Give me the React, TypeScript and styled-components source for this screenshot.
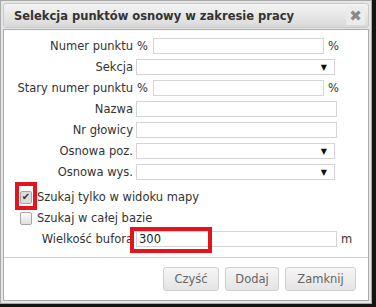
import React from 'react';
import styled, { createGlobalStyle } from 'styled-components';

const GlobalStyle = createGlobalStyle`
  html, body {
    margin: 0;
    padding: 0;
    background: #141414;
  }
  body {
    font-family: "DejaVu Sans", Verdana, sans-serif;
    font-size: 11.5px;
    color: #333;
  }
`;

const Dialog = styled.div`
  width: 372px;
  height: 304px;
  box-sizing: border-box;
  border: 1px solid #a9a9a9;
  background: #e6e6e6;
  padding: 2px;
  display: flex;
  flex-direction: column;
  gap: 1px;
`;

const TitleBar = styled.div`
  height: 25px;
  box-sizing: border-box;
  border: 1px solid #c8c8c8;
  border-radius: 3px;
  background: linear-gradient(#f4f4f4, #d9d9d9);
  display: flex;
  align-items: center;
  justify-content: space-between;
  padding: 0 3px 0 10px;
`;

const Title = styled.span`
  font-weight: bold;
  font-size: 11.5px;
  color: #333;
`;

const CloseBtn = styled.span`
  width: 19px;
  height: 19px;
  display: flex;
  align-items: center;
  justify-content: center;
  background: #ececec;
  border-radius: 2px;
  color: #8a8a8a;
  font-size: 15px;
  font-weight: bold;
`;

const Body = styled.div`
  flex: 1;
  background: #fff;
  border: 1px solid #ababab;
  display: flex;
  flex-direction: column;
`;

const Form = styled.div<{ $top: number }>`
  padding-top: ${p => p.$top}px;
  display: flex;
  flex-direction: column;
  gap: 5px;
`;

const Row = styled.div`
  display: flex;
  align-items: center;
  height: 16px;
`;

const Label = styled.span`
  width: 129px;
  text-align: right;
  margin-right: 3px;
  white-space: nowrap;
`;

const Prefix = styled.span`
  width: 16px;
  padding-left: 1px;
`;

const Suffix = styled.span`
  margin-left: 4px;
`;

const Field = styled.div<{ $w: number }>`
  position: relative;
  width: ${p => p.$w}px;
  height: 16px;
  box-sizing: border-box;
  border: 1px solid #d4d4d4;
  background: #fff;
  display: flex;
  align-items: center;
  justify-content: space-between;
  padding: 0 7px 0 2px;
  font-size: 11.5px;
  color: #222;
`;

const Arrow = styled.span`
  font-size: 8px;
  color: #111;
`;

const Marker = styled.span<{ $l: number; $t: number; $w: number; $h: number }>`
  position: absolute;
  left: ${p => p.$l}px;
  top: ${p => p.$t}px;
  width: ${p => p.$w}px;
  height: ${p => p.$h}px;
  box-sizing: border-box;
  border: 4px solid #e3141c;
`;

const CheckRow = styled.div<{ $indent: number }>`
  display: flex;
  align-items: center;
  gap: 5px;
  padding-left: ${p => p.$indent}px;
  height: 16px;
`;

const Box = styled.span<{ $checked?: boolean }>`
  position: relative;
  width: 12px;
  height: 13px;
  box-sizing: border-box;
  border: 1px solid #a6a6a6;
  border-radius: 2px;
  background: ${p => (p.$checked ? '#dcdcdc' : 'linear-gradient(#fdfdfd, #dedede)')};
  display: flex;
  align-items: center;
  justify-content: center;
  font-size: 10px;
  color: #333;
  line-height: 1;
`;

const Sep = styled.div`
  margin-top: 10px;
  border-top: 1px solid #d0d0d0;
`;

const Buttons = styled.div`
  display: flex;
  justify-content: flex-end;
  gap: 6px;
  padding: 9px 12px 0 0;
`;

const Button = styled.button<{ $w: number }>`
  width: ${p => p.$w}px;
  height: 24px;
  font-family: "DejaVu Sans", Verdana, sans-serif;
  font-size: 11.5px;
  color: #666;
  background: linear-gradient(#f6f6f6, #e4e4e4);
  border: 1px solid #cfcfcf;
  border-radius: 3px;
  padding: 0;
`;

const fields = [
  { label: 'Numer punktu', kind: 'pct' },
  { label: 'Sekcja', kind: 'select' },
  { label: 'Stary numer punktu', kind: 'pct' },
  { label: 'Nazwa', kind: 'text' },
  { label: 'Nr głowicy', kind: 'text' },
  { label: 'Osnowa poz.', kind: 'select' },
  { label: 'Osnowa wys.', kind: 'select' },
];

export default function App() {
  return (
    <>
      <GlobalStyle />
      <Dialog>
        <TitleBar>
          <Title>Selekcja punktów osnowy w zakresie pracy</Title>
          <CloseBtn>✖</CloseBtn>
        </TitleBar>
        <Body>
          <Form $top={8}>
            {fields.map(f => (
              <Row key={f.label}>
                <Label>{f.label}</Label>
                {f.kind === 'pct' ? (
                  <>
                    <Prefix>%</Prefix>
                    <Field $w={171} />
                    <Suffix>%</Suffix>
                  </>
                ) : f.kind === 'select' ? (
                  <Field $w={199}>
                    <span />
                    <Arrow>▼</Arrow>
                  </Field>
                ) : (
                  <Field $w={201} />
                )}
              </Row>
            ))}
          </Form>
          <Form $top={9}>
            <CheckRow $indent={16}>
              <Box $checked>
                ✔
                <Marker $l={-6} $t={-10} $w={22} $h={28} />
              </Box>
              <span>Szukaj tylko w widoku mapy</span>
            </CheckRow>
            <CheckRow $indent={16}>
              <Box />
              <span>Szukaj w całej bazie</span>
            </CheckRow>
            <Row>
              <Label>Wielkość bufora</Label>
              <Field $w={201}>
                <span>300</span>
                <Marker $l={-7} $t={-5} $w={82} $h={26} />
              </Field>
              <Suffix>m</Suffix>
            </Row>
          </Form>
          <Sep />
          <Buttons>
            <Button $w={56}>Czyść</Button>
            <Button $w={54}>Dodaj</Button>
            <Button $w={71}>Zamknij</Button>
          </Buttons>
        </Body>
      </Dialog>
    </>
  );
}
